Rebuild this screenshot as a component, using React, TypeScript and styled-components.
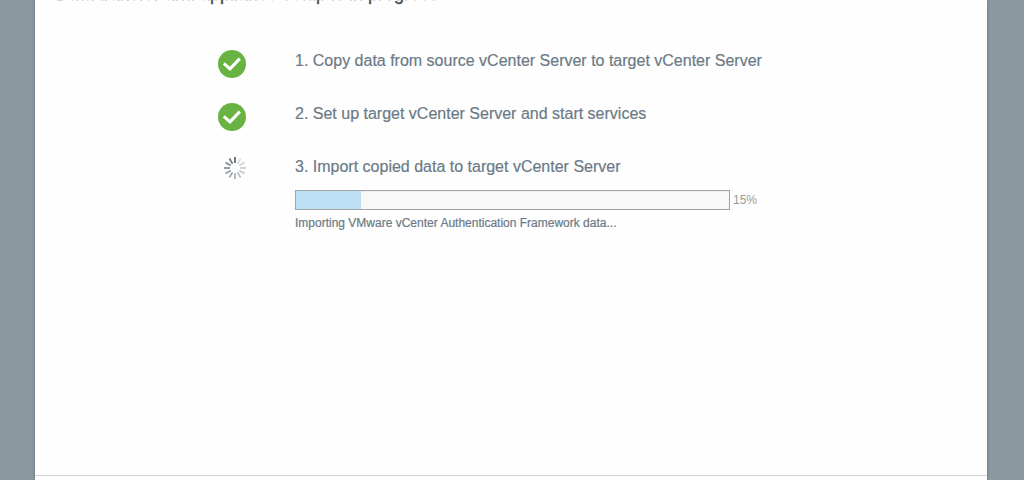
import React from 'react';
import styled, { createGlobalStyle } from 'styled-components';

const GlobalStyle = createGlobalStyle`
  * { box-sizing: border-box; }
  body {
    margin: 0;
    background: #8b989f;
    overflow: hidden;
    font-family: "Liberation Sans", Arial, sans-serif;
  }
`;

const Page = styled.div`
  height: 480px;
  padding: 0 37px 0 35px;
  overflow: hidden;
`;

const Dialog = styled.main`
  height: 480px;
  display: flex;
  flex-direction: column;
  background: #fefefe;
  box-shadow: 0 0 3px rgba(60, 70, 80, 0.45);
`;

const Heading = styled.h1`
  margin: -17px 0 0 20.8px;
  height: 22px;
  flex: none;
  font-size: 18px;
  line-height: 22px;
  font-weight: 400;
  color: #47515a;
  -webkit-text-stroke: 0.4px #47515a;
  white-space: nowrap;
`;

const Steps = styled.ol`
  flex: 1;
  margin: 0;
  padding: 45px 0 0 183px;
  list-style: none;
`;

const Step = styled.li`
  display: flex;
  height: 53px;
`;

const StepIcon = styled.div<{ $lift?: number }>`
  width: 77px;
  flex: none;
  margin-top: ${({ $lift = 0 }) => -$lift}px;
  svg { display: block; }
`;

const StepBody = styled.div`
  flex: none;
`;

const StepTitle = styled.div`
  height: 20px;
  font-size: 16px;
  line-height: 22px;
  color: #6b7a86;
  -webkit-text-stroke: 0.2px #6b7a86;
  white-space: nowrap;
`;

const ProgressRow = styled.div`
  display: flex;
  align-items: center;
  gap: 3px;
  margin-top: 14px;
`;

const Track = styled.div`
  width: 435px;
  height: 20px;
  background: #f8f8f8;
  border: 1px solid #a3a3a3;
  box-shadow: inset 0 1px 2px #eeeeee;
`;

const Fill = styled.div`
  height: 100%;
  background: #bcdff3;
`;

const Percent = styled.span`
  font-size: 12px;
  color: #9b9b9b;
`;

const Status = styled.div`
  margin-top: 6px;
  font-size: 12px;
  line-height: 15px;
  color: #6b7a86;
  -webkit-text-stroke: 0.2px #6b7a86;
  white-space: nowrap;
`;

const Footer = styled.footer`
  height: 5px;
  flex: none;
  border-top: 1px solid #cfd5d9;
`;

const Done = () => (
  <svg width="28" height="28" viewBox="0 0 28 28">
    <circle cx="14" cy="14" r="14" fill="#69b342" />
    <path d="M5.8 13.4 L12 18.8 L21.8 8.6" fill="none" stroke="#fff" strokeWidth="3.1" />
  </svg>
);

const spokeColors = [
  '#68717c', '#dde0e5', '#d3d7dd', '#cdd1d8', '#c4c9d1', '#bcc1ca',
  '#b1b7c0', '#a7adb7', '#9ba2ad', '#9097a3', '#858d99', '#78818d',
];

const Spinner = () => (
  <svg width="34" height="28" viewBox="0 0 34 28">
    {spokeColors.map((color, i) => (
      <line
        key={color}
        x1="17" y1="3" x2="17" y2="9"
        stroke={color}
        strokeWidth="1.9"
        transform={`rotate(${i * 30} 17 14)`}
      />
    ))}
  </svg>
);

export default function App() {
  const percent = 15;
  return (
    <Page>
      <GlobalStyle />
      <Dialog>
        <Heading>Data transfer and appliance setup is in progress</Heading>
        <Steps>
          <Step>
            <StepIcon><Done /></StepIcon>
            <StepBody>
              <StepTitle>1. Copy data from source vCenter Server to target vCenter Server</StepTitle>
            </StepBody>
          </Step>
          <Step>
            <StepIcon><Done /></StepIcon>
            <StepBody>
              <StepTitle>2. Set up target vCenter Server and start services</StepTitle>
            </StepBody>
          </Step>
          <Step>
            <StepIcon $lift={2}><Spinner /></StepIcon>
            <StepBody>
              <StepTitle>3. Import copied data to target vCenter Server</StepTitle>
              <ProgressRow>
                <Track><Fill style={{ width: `${percent}%` }} /></Track>
                <Percent>{percent}%</Percent>
              </ProgressRow>
              <Status>Importing VMware vCenter Authentication Framework data...</Status>
            </StepBody>
          </Step>
        </Steps>
        <Footer />
      </Dialog>
    </Page>
  );
}
